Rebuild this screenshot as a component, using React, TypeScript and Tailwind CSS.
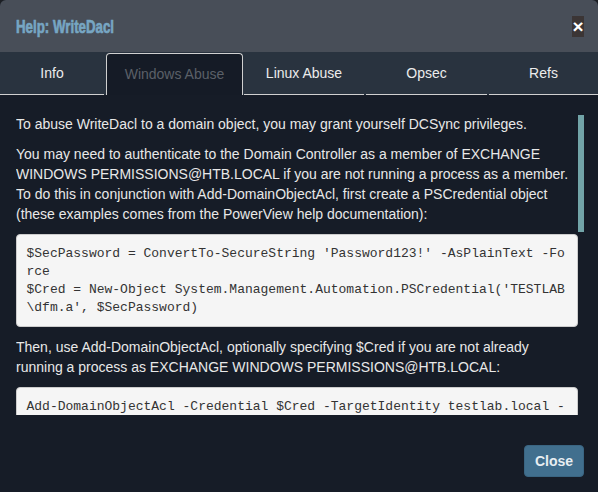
import React from 'react';

const tabs = [
  { label: 'Info', w: 'w-[104px] mr-[2px]' },
  { label: 'Windows Abuse', w: 'w-[137px] mr-[1px]', active: true },
  { label: 'Linux Abuse', w: 'w-[120px] mr-[2px]' },
  { label: 'Opsec', w: 'w-[121px] mr-[2px]' },
  { label: 'Refs', w: 'flex-1' },
];

const Code = ({ children }: { children: string }) => (
  <pre className="mb-[10px] whitespace-pre-wrap break-all rounded-[4px] border border-[#cccccc] bg-[#f5f5f5] p-[9.5px] font-['Liberation_Mono',monospace] text-[13px] leading-[18px] text-[#333333]">
    {children}
  </pre>
);

const App = () => {
  return (
    <div className="h-[492px] w-[598px] overflow-hidden bg-[#1c1f24] font-['Liberation_Sans',Arial,sans-serif]">
      <div className="flex h-full flex-col overflow-hidden rounded-t-[6px] bg-[#161c27]">
        {/* header */}
        <div className="flex h-[52px] shrink-0 items-center justify-between bg-[#484e58] pl-[16px] pr-[14px]">
          <h4 className="inline-block origin-left scale-x-[0.7] text-[19px] font-bold leading-none text-[#77a6c3] [-webkit-text-stroke:0.7px_#77a6c3]">
            Help: WriteDacl
          </h4>
          <button className="flex h-[21px] w-[12px] items-center justify-center bg-[#3b3535] text-[19px] font-bold leading-none text-white">
            ×
          </button>
        </div>

        {/* tabs */}
        <div className="flex h-[43px] shrink-0 bg-[#29333f] pt-px">
          {tabs.map((t) =>
            t.active ? (
              <div
                key={t.label}
                className={`${t.w} flex items-center justify-center rounded-t-[4px] border border-b-0 border-[#d0d0d0] bg-[#151b26] text-[14px] text-[#5b6068]`}
              >
                {t.label}
              </div>
            ) : (
              <div
                key={t.label}
                className={`${t.w} flex items-center justify-center border-b border-[#d0d0d0] text-[14px] text-[#ececec]`}
              >
                {t.label}
              </div>
            ),
          )}
        </div>

        {/* body */}
        <div className="relative ml-[16px] mr-[14px] mt-[15px] h-[305px] shrink-0 overflow-hidden">
          <div className="pr-[6px] pt-[4px] text-[14px] leading-[20px] text-[#e8e8e8]">
            <p className="mb-[10px]">
              To abuse WriteDacl to a domain object, you may grant yourself DCSync privileges.
            </p>
            <p className="mb-[10px]">
              You may need to authenticate to the Domain Controller as a member of EXCHANGE WINDOWS
              PERMISSIONS@HTB.LOCAL if you are not running a process as a member. To do this in
              conjunction with Add-DomainObjectAcl, first create a PSCredential object (these
              examples comes from the PowerView help documentation):
            </p>
            <Code>
              {"$SecPassword = ConvertTo-SecureString 'Password123!' -AsPlainText -Force\n$Cred = New-Object System.Management.Automation.PSCredential('TESTLAB\\dfm.a', $SecPassword)"}
            </Code>
            <p className="mb-[10px]">
              Then, use Add-DomainObjectAcl, optionally specifying $Cred if you are not already
              running a process as EXCHANGE WINDOWS PERMISSIONS@HTB.LOCAL:
            </p>
            <Code>
              {'Add-DomainObjectAcl -Credential $Cred -TargetIdentity testlab.local -Rights DCSync'}
            </Code>
          </div>
          {/* scrollbar thumb */}
          <div className="absolute right-0 top-[5px] h-[117px] w-[6px] bg-[#72a4a8]" />
        </div>

        {/* footer */}
        <div className="flex flex-1 items-start justify-end pr-[14px] pt-[30px]">
          <button className="h-[32px] w-[60px] rounded-[4px] border border-[#3a6582] bg-[#416f8e] text-[14px] font-bold leading-none text-[#e8eef2]">
            Close
          </button>
        </div>
      </div>
    </div>
  );
};

export default App;
